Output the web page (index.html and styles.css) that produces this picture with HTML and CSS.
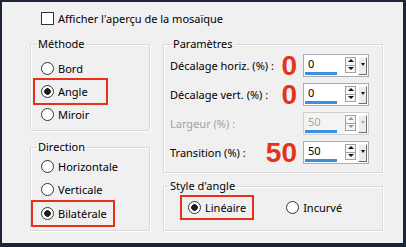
FILE: index.html
```html
<!DOCTYPE html>
<html lang="fr">
<head>
    <meta charset="UTF-8">
    <title>Mosaïque - options</title>
    <link rel="stylesheet" href="styles.css">
</head>
<body>
    <div class="dialog">
        <label class="check"><span class="box"></span>Afficher l'aperçu de la mosaïque</label>
        <div class="cols">
            <div class="col col-left">
                <fieldset class="group method">
                    <legend>Méthode</legend>
                    <label class="radio"><span class="dot"></span>Bord</label>
                    <label class="radio mark mark-angle"><span class="dot on"></span>Angle</label>
                    <label class="radio"><span class="dot"></span>Miroir</label>
                </fieldset>
                <fieldset class="group direction">
                    <legend>Direction</legend>
                    <label class="radio"><span class="dot"></span>Horizontale</label>
                    <label class="radio"><span class="dot"></span>Verticale</label>
                    <label class="radio mark mark-bilat"><span class="dot on"></span>Bilatérale</label>
                </fieldset>
            </div>
            <div class="col col-right">
                <fieldset class="group params">
                    <legend>Paramètres</legend>
                    <div class="row">
                        <span class="lbl">Décalage horiz. (%) :</span>
                        <span class="big">0</span>
                        <div class="spin">
                            <div class="field"><span>0</span><i class="bar"></i></div>
                            <div class="arrows"><b class="up"></b><b class="down"></b></div>
                            <b class="drop"></b>
                        </div>
                    </div>
                    <div class="row">
                        <span class="lbl">Décalage vert. (%) :</span>
                        <span class="big">0</span>
                        <div class="spin">
                            <div class="field"><span>0</span><i class="bar"></i></div>
                            <div class="arrows"><b class="up"></b><b class="down"></b></div>
                            <b class="drop"></b>
                        </div>
                    </div>
                    <div class="row disabled">
                        <span class="lbl">Largeur (%) :</span>
                        <span class="big"></span>
                        <div class="spin">
                            <div class="field"><span>50</span><i class="bar"></i></div>
                            <div class="arrows"><b class="up"></b><b class="down"></b></div>
                            <b class="drop"></b>
                        </div>
                    </div>
                    <div class="row">
                        <span class="lbl">Transition (%) :</span>
                        <span class="big">50</span>
                        <div class="spin">
                            <div class="field"><span>50</span><i class="bar"></i></div>
                            <div class="arrows"><b class="up"></b><b class="down"></b></div>
                            <b class="drop"></b>
                        </div>
                    </div>
                </fieldset>
                <fieldset class="group style">
                    <legend>Style d'angle</legend>
                    <div class="opts">
                        <label class="radio mark mark-lin"><span class="dot on"></span>Linéaire</label>
                        <label class="radio"><span class="dot"></span>Incurvé</label>
                    </div>
                </fieldset>
            </div>
        </div>
    </div>
</body>
</html>
```

FILE: styles.css
```css
body {
    margin: 0;
    width: 406px;
    height: 247px;
    background-color: #1c2536;
    font-family: "Noto Sans", Arial, sans-serif;
    font-size: 11px;
    color: #000;
    overflow: hidden;
}

.dialog {
    margin: 2px 3px 4px 2px;
    height: 241px;
    box-sizing: border-box;
    padding: 10px 0 0 28px;
    background-color: #f0f0f0;
}

.check {
    display: flex;
    align-items: center;
    height: 13px;
    margin-left: 11px;
}

.check .box {
    width: 11px;
    height: 11px;
    border: 1px solid #333;
    background: #fff;
    margin-right: 4px;
}

.cols {
    display: flex;
    gap: 13px;
    margin-top: 12px;
}

.col {
    display: flex;
    flex-direction: column;
}

.col-left {
    width: 120px;
    gap: 9px;
}

.col-right {
    width: 220px;
    gap: 6px;
}

/* group boxes */
.group {
    margin: 0;
    padding: 0;
    min-width: 0;
    border: 1px solid #dadada;
    box-shadow: inset 1px 1px 0 #fff, 1px 1px 0 #fff;
    box-sizing: border-box;
}

.group legend {
    padding: 0 1px;
    margin-left: 6px;
    line-height: 14px;
}

.method {
    height: 94px;
    padding-top: 6px;
}

.direction {
    height: 91px;
    padding-top: 1px;
}

.direction .radio:last-child {
    margin-top: 1px;
}

.params {
    height: 136px;
    padding: 3px 13px 0 6px;
    display: flex;
    flex-direction: column;
    gap: 6px;
}

.params legend {
    margin-left: 2px;
}

.style {
    height: 52px;
}

.style legend {
    margin-left: 5px;
}

/* radio buttons */
.radio {
    position: relative;
    display: flex;
    align-items: center;
    height: 23px;
    padding-left: 10px;
    width: fit-content;
    white-space: nowrap;
}

.dot {
    width: 11px;
    height: 11px;
    border: 1px solid #333;
    border-radius: 50%;
    background: #fff;
    margin-right: 4px;
}

.dot.on {
    background: radial-gradient(circle, #1e1e1e 3px, #fff 3.6px);
}

.mark::after {
    content: "";
    position: absolute;
    top: -2px;
    bottom: -2px;
    border: 2px solid #e6311b;
}

.mark-angle::after {
    left: 2px;
    width: 71px;
}

.mark-bilat::after {
    left: 0;
    width: 80px;
}

.opts {
    display: flex;
    align-items: center;
    margin-top: 3px;
}

.opts .radio {
    padding-left: 24px;
}

.opts .radio + .radio {
    padding-left: 40px;
}

.mark-lin::after {
    left: 16px;
    width: 70px;
    top: -1px;
    bottom: -1px;
}

/* parameter rows */
.row {
    display: flex;
    align-items: center;
    height: 23px;
}

.lbl {
    flex: 1;
    white-space: nowrap;
}

.big {
    font-family: "Liberation Sans", Arial, sans-serif;
    font-weight: bold;
    font-size: 28px;
    line-height: 23px;
    color: #e6311b;
    margin-right: 6px;
}

.spin {
    display: flex;
    width: 66px;
    height: 23px;
    box-sizing: border-box;
    border: 1px solid #acacac;
    background: #fff;
}

.field {
    flex: 1;
    display: flex;
    flex-direction: column;
    padding-left: 1px;
}

.field span {
    padding-left: 3px;
    line-height: 17px;
}

.bar {
    display: block;
    width: 32px;
    height: 3px;
    margin-top: auto;
    margin-bottom: 1px;
    background: #3b8fdb;
}

.arrows {
    display: flex;
    flex-direction: column;
    width: 11px;
    margin: 2px 2px 3px 0;
}

.arrows b {
    flex: 1;
    position: relative;
    border: 1px solid #a2a2a2;
    background: #f6f6f6;
}

.arrows b + b {
    border-top: 0;
}

.arrows b::after,
.drop::after {
    content: "";
    position: absolute;
    left: 50%;
    top: 50%;
    margin: -2px 0 0 -3px;
    border-left: 3px solid transparent;
    border-right: 3px solid transparent;
}

.arrows .up::after {
    border-bottom: 3px solid #111;
}

.arrows .down::after {
    border-top: 3px solid #111;
}

.drop {
    position: relative;
    width: 7px;
    margin: 2px 1px 1px 0;
    background: #ececec;
    border-top: 1px solid #fff;
    border-left: 1px solid #fff;
    border-right: 1px solid #6e6e6e;
    border-bottom: 1px solid #6e6e6e;
}

.drop::after {
    top: 5px;
    margin: 0 0 0 -2px;
    border-left-width: 2px;
    border-right-width: 2px;
    border-top: 3px solid #111;
}

.disabled .lbl,
.disabled .field span {
    color: #a3a3a3;
}

.disabled .spin {
    border-color: #cfcfcf;
}

.disabled .field {
    background: #f4f4f4;
}

.disabled .arrows b::after {
    border-bottom-color: #9a9a9a;
    border-top-color: #9a9a9a;
}

.disabled .drop::after {
    border-top-color: #aaa;
}
```
